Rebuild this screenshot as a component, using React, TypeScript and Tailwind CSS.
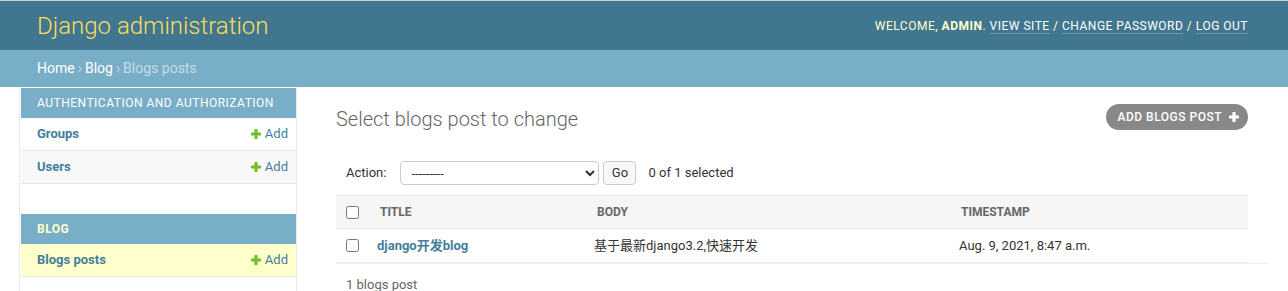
import React from 'react';

const PlusIcon = ({ className }: { className?: string }) => (
  <svg viewBox="0 0 10 10" className={className} fill="currentColor">
    <path d="M3.4 0.6Q3.4 0 4 0h2q0.6 0 0.6 0.6v2.8h2.8q0.6 0 0.6 0.6v2q0 0.6-0.6 0.6H6.6v2.8q0 0.6-0.6 0.6H4q-0.6 0-0.6-0.6V6.6H0.6Q0 6.6 0 6V4q0-0.6 0.6-0.6h2.8z" />
  </svg>
);

const AddLink = () => (
  <span className="flex items-center gap-[4px] text-[13px] text-[#447e9b]">
    <PlusIcon className="w-[10px] h-[10px] text-[#70bf2b]" />
    Add
  </span>
);

const models = [
  { app: 'Authentication and Authorization', current: false, rows: ['Groups', 'Users'] },
  { app: 'Blog', current: true, rows: ['Blogs posts'] },
];

export default function App() {
  return (
    <div className="min-h-screen bg-white font-['Roboto','Noto_Sans_CJK_SC',sans-serif] text-[13px] text-[#333] border-t border-[#cfcfcf]">
      {/* header */}
      <div className="h-[49px] bg-[#417690] flex items-center justify-between pl-[37px] pr-10">
        <div className="text-[24px] font-light text-[#f5dd5d] leading-none">Django administration</div>
        <div className="text-[12px] tracking-[0.5px] uppercase text-[#ffffcc]">
          Welcome, <strong className="font-bold">admin</strong>.{' '}
          <a className="text-white border-b border-white/25">View site</a> /{' '}
          <a className="text-white border-b border-white/25">Change password</a> /{' '}
          <a className="text-white border-b border-white/25">Log out</a>
        </div>
      </div>

      {/* breadcrumbs */}
      <div className="h-[37px] bg-[#79aec8] flex items-center pl-[37px] text-[14px] text-[#c4dce8]">
        <a className="text-white">Home</a>
        <span className="mx-[3px]">›</span>
        <a className="text-white">Blog</a>
        <span className="mx-[3px]">›</span>
        <span>Blogs posts</span>
      </div>

      <div className="flex">
        {/* sidebar */}
        <div className="ml-[19px] w-[278px] shrink-0 border-l border-r border-[#eaeaea] pl-px pt-px min-h-[210px]">
          {models.map((m) => (
            <div key={m.app} className="w-[275px] mb-[30px]">
              <div
                className={
                  'h-[30px] bg-[#79aec8] pl-4 flex items-center text-[12px] uppercase tracking-[0.5px] ' +
                  (m.current ? 'font-bold text-[#ffffcc]' : 'text-white')
                }
              >
                {m.app}
              </div>
              {m.rows.map((r, i) => (
                <div
                  key={r}
                  className={
                    'h-[33px] border-b border-[#e8e8e8] pl-4 pr-2 flex items-center justify-between ' +
                    (m.current ? 'bg-[#ffffcc]' : i % 2 === 1 ? 'bg-[#f8f8f8]' : 'bg-white')
                  }
                >
                  <a className="font-bold text-[#447e9b]">{r}</a>
                  <AddLink />
                </div>
              ))}
            </div>
          ))}
        </div>

        {/* content */}
        <div className="flex-1 pl-[39px] pr-10">
          <div className="flex justify-between items-start pt-[17px] mb-[20px]">
            <h1 className="mt-[3px] text-[20px] leading-[24px] font-light text-[#666]">Select blogs post to change</h1>
            <a className="h-[26px] flex items-center rounded-[15px] bg-[#888] pl-3 pr-[9px] text-[12px] font-medium tracking-[0.5px] uppercase text-white">
              Add blogs post
              <PlusIcon className="w-[10px] h-[10px] ml-[7px]" />
            </a>
          </div>

          <div className="flex items-center py-[10px] px-[10px]">
            <label className="text-[13px] text-[#333] mr-[14px]">Action:</label>
            <select className="w-[199px] h-[24px] border border-[#ccc] rounded-[4px] text-[13px] pl-[6px] bg-white text-[#333]">
              <option>---------</option>
            </select>
            <button className="ml-[4px] h-[24px] w-[33px] border border-[#ccc] rounded-[4px] bg-[#f8f8f8] text-[13px] text-[#333]">
              Go
            </button>
            <span className="ml-[12px] text-[13px] text-[#333]">0 of 1 selected</span>
          </div>

          <table className="w-full table-fixed border-separate border-spacing-0">
            <colgroup>
              <col className="w-[33px]" />
              <col className="w-[217px]" />
              <col className="w-[365px]" />
              <col />
            </colgroup>
            <thead>
              <tr className="bg-[#f6f6f6]">
                <th className="h-[34px] p-0 pl-[10px] text-left align-middle border-t border-b border-[#e8e8e8]">
                  <input type="checkbox" className="w-[13px] h-[13px] block m-0" />
                </th>
                <th className="p-0 text-left pl-[11px] text-[12px] font-bold uppercase text-[#666] border-t border-b border-[#e8e8e8]">Title</th>
                <th className="p-0 text-left pl-[11px] text-[12px] font-bold uppercase text-[#666] border-t border-b border-[#e8e8e8]">Body</th>
                <th className="p-0 text-left pl-[10px] text-[12px] font-bold uppercase text-[#666] border-t border-b border-[#e8e8e8]">Timestamp</th>
              </tr>
            </thead>
            <tbody>
              <tr>
                <td className="h-[34px] p-0 pl-[10px] border-b border-[#eee]">
                  <input type="checkbox" className="w-[13px] h-[13px] block m-0" />
                </td>
                <td className="p-0 pl-2 border-b border-[#eee]">
                  <a className="font-bold text-[#447e9b]">django开发blog</a>
                </td>
                <td className="p-0 pl-2 border-b border-[#eee]">基于最新django3.2,快速开发</td>
                <td className="p-0 pl-2 border-b border-[#eee]">Aug. 9, 2021, 8:47 a.m.</td>
              </tr>
            </tbody>
          </table>

          <div className="mr-[-20px] border-t border-[#eee] pl-[10px] pt-[10px] leading-[22px] text-[13px] text-[#666]">
            1 blogs post
          </div>
        </div>
      </div>
    </div>
  );
}
